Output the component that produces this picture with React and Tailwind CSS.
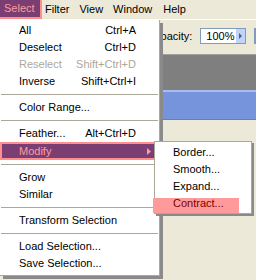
import React from 'react';

const menuItems = [
  { label: 'All', key: 'Ctrl+A' },
  { label: 'Deselect', key: 'Ctrl+D' },
  { label: 'Reselect', key: 'Shift+Ctrl+D', disabled: true },
  { label: 'Inverse', key: 'Shift+Ctrl+I' },
  { sep: true },
  { label: 'Color Range...' },
  { sep: true },
  { label: 'Feather...', key: 'Alt+Ctrl+D' },
  { label: 'Modify', sub: true },
  { sep: true },
  { label: 'Grow' },
  { label: 'Similar' },
  { sep: true },
  { label: 'Transform Selection' },
  { sep: true },
  { label: 'Load Selection...' },
  { label: 'Save Selection...' },
];

const subItems = ['Border...', 'Smooth...', 'Expand...', 'Contract...'];

const SubMenu = () => (
  <div className="absolute left-[154px] top-[-1px] z-20 w-[98px] bg-white border border-[#aca899] pt-[2px] pb-[1px] shadow-[2px_2px_0_#8a8a8a]">
    {subItems.map((s, i) => (
      <div key={s} className="relative h-[17px] flex items-center pl-[18px]">
        {i === 3 && <div className="absolute left-[-2px] right-[12px] top-[3px] bottom-[-1px] bg-[#ff9a9a]" />}
        <span className={i === 3 ? 'relative text-[#7a0000]' : 'relative text-black'}>{s}</span>
      </div>
    ))}
  </div>
);

const MenuRow = ({ item }) => {
  if (item.sep) {
    return (
      <div className="h-[9px] flex items-center px-[1px]">
        <div className="w-full h-px bg-[#aca899]" />
      </div>
    );
  }
  if (item.sub) {
    return (
      <div className="relative h-[18px]">
        <div className="h-full flex items-center justify-between pl-[17px] pr-[6px] bg-[#7a3e73] border-2 border-[#ff8f8f] text-[#ff9c9c]">
          <span>{item.label}</span>
          <svg width="4" height="7" viewBox="0 0 4 7"><path d="M0 0 L4 3.5 L0 7 Z" fill="#ff9c9c" /></svg>
        </div>
        <SubMenu />
      </div>
    );
  }
  return (
    <div className={`h-[17px] flex items-center justify-between pl-[19px] pr-[23px] ${item.disabled ? 'text-[#aca899]' : 'text-black'}`}>
      <span>{item.label}</span>
      {item.key && <span>{item.key}</span>}
    </div>
  );
};

export default function App() {
  return (
    <div
      className="relative w-[256px] h-[280px] overflow-hidden bg-[#ece9d8] text-[11px] leading-none text-black"
      style={{ fontFamily: '"Liberation Sans", Arial, sans-serif' }}
    >
      {/* menu bar */}
      <div className="h-[20px] flex items-stretch border-b border-white">
        <div className="w-[42px] flex items-center pl-[4px] bg-[#7a3e73] border-r-2 border-b-2 border-[#ff8f8f] text-[#ff9c9c]">Select</div>
        <div className="flex items-center gap-[10px] pl-[3px]">
          <span>Filter</span>
          <span>View</span>
          <span>Window</span>
          <span className="pl-[1px]">Help</span>
        </div>
      </div>

      {/* options bar */}
      <div className="h-[35px] flex items-center pl-[152px] gap-[8px] border-b border-[#a0a0a0]">
        <span className="mt-[-2px]">Opacity:</span>
        <div className="mt-[-2px] h-[16px] w-[46px] flex items-center bg-white border border-[#7f9db9]">
          <span className="flex-1 pl-[5px]">100%</span>
          <div className="w-[9px] h-full flex items-center justify-center bg-[#c1d3fb]">
            <svg width="3" height="6" viewBox="0 0 3 6"><path d="M0 0 L3 3 L0 6 Z" fill="#4d6185" /></svg>
          </div>
        </div>
        <div className="mt-[-2px] h-[16px] flex-1 bg-white border border-[#7f9db9]" />
      </div>

      {/* gray strip */}
      <div className="h-[35px] bg-[#7f7f7f]" />
      {/* blue title strip */}
      <div className="h-[30px] bg-[#7594dc] border-t-2 border-[#a7bdf2] border-b border-b-[#5f7fcc]" />

      {/* dropdown */}
      <div className="absolute left-0 top-[20px] z-10 w-[160px] bg-white border-r border-b border-[#aca899] pt-[2px] pb-[3px] shadow-[3px_3px_0_#8a8a8a]">
        {menuItems.map((item, i) => (
          <MenuRow key={i} item={item} />
        ))}
      </div>
    </div>
  );
}
